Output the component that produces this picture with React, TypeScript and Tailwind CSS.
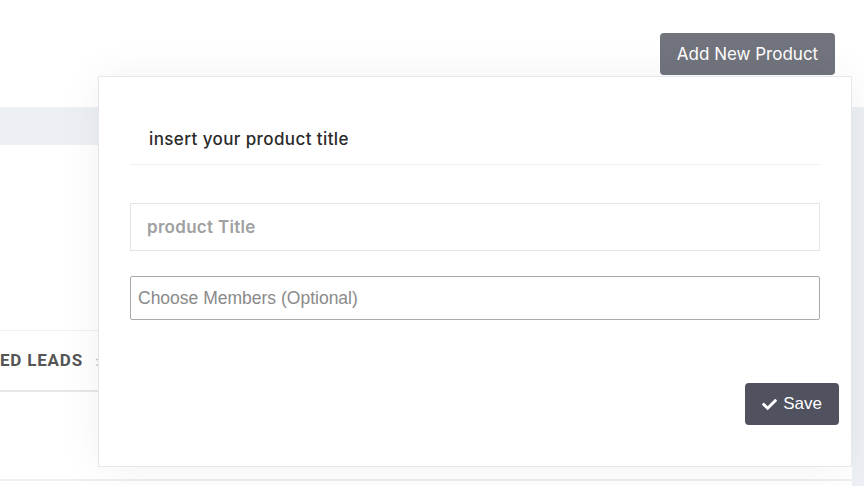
import { FaCheck } from 'react-icons/fa';

export default function App() {
  return (
    <div className="relative w-[864px] h-[486px] overflow-hidden bg-[#eceff4] font-['Inter',sans-serif]">
      <header className="h-[107px] bg-white flex justify-end items-start pt-[33px] pr-[29px]">
        <button className="h-[42px] w-[175px] rounded-[4px] bg-[#72747d] text-white text-[17px] pt-[1px]">
          Add New Product
        </button>
      </header>

      <div className="pt-[38px] pr-[12px] h-[379px]">
        <div className="bg-white h-full flex flex-col">
          <div className="h-[185px]" />
          <div className="h-[62px] border-t border-[#eeeff2] border-b-2 border-b-[#e5e7eb] flex items-center gap-[12px]">
            <span className="text-[17px] font-bold text-[#555] font-['Roboto',sans-serif] tracking-[0.8px]">ED LEADS</span>
            <span className="text-[#bbb] text-[14px]">:</span>
          </div>
          <div className="h-[87px]" />
          <div className="border-t-2 border-[#eceef1]" />
        </div>
      </div>

      <div className="absolute left-[98px] top-[76px] w-[754px] h-[391px] bg-white border border-[#e6e7ea] shadow-[0_0_40px_rgba(0,0,0,0.06)] flex flex-col px-[31px]">
        <div className="pt-[52px] pb-[15px] pl-[19px] border-b border-[#eef2f7]">
          <h2 className="text-[17px] font-medium text-[#2b2b2b] leading-[20px] tracking-[0.4px]">insert your product title</h2>
        </div>

        <input
          className="mt-[38px] h-[48px] w-full border border-[#e4e4e4] px-[16px] text-[17px] tracking-[0.3px] font-semibold placeholder:text-[#a0a0a0] outline-none"
          placeholder="product Title"
        />
        <input
          className="mt-[25px] h-[44px] w-full border border-[#aaaaaa] rounded-[2px] px-[7px] text-[17.5px] font-['Liberation_Sans',sans-serif] placeholder:text-[#8a8a8a] outline-none"
          placeholder="Choose Members (Optional)"
        />

        <div className="flex justify-end mt-[63px] mr-[-19px]">
          <button className="h-[42px] w-[94px] rounded-[4px] bg-[#50525f] text-white text-[17px] font-['Liberation_Sans',sans-serif] flex items-center justify-center gap-[6px]">
            <FaCheck className="w-[15px] h-[15px]" />
            Save
          </button>
        </div>
      </div>
    </div>
  );
}
